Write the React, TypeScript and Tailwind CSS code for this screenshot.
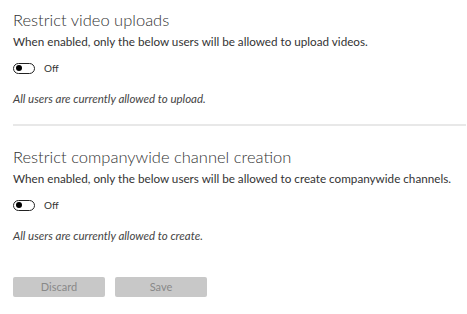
import { useState } from "react";

type SettingProps = {
  title: string;
  description: string;
  status: string;
};

function Toggle({ on, onChange }: { on: boolean; onChange: () => void }) {
  return (
    <button
      type="button"
      onClick={onChange}
      className="flex h-[11px] w-[22px] items-center rounded-full border border-[#222] bg-white px-[2px]"
    >
      <span className={`h-[6px] w-[6px] rounded-full bg-black ${on ? "ml-auto" : ""}`} />
    </button>
  );
}

function Setting({ title, description, status }: SettingProps) {
  const [on, setOn] = useState(false);
  return (
    <section>
      <h2 className="text-[16.5px] font-light leading-[22px] text-[#333]">{title}</h2>
      <p className="mt-[2px] text-[11.7px] leading-[16px] text-[#333]">{description}</p>
      <div className="mt-[12px] flex items-center gap-[9px]">
        <Toggle on={on} onChange={() => setOn(!on)} />
        <span className="text-[10px] leading-[14px] text-[#333]">{on ? "On" : "Off"}</span>
      </div>
      <p className="mt-[16px] text-[11.5px] italic leading-[16px] text-[#444]">{status}</p>
    </section>
  );
}

export default function App() {
  return (
    <div className="min-h-[314px] bg-white pl-[13px] pr-[1px] pt-[9px] font-['Lato',sans-serif]">
      <Setting
        title="Restrict video uploads"
        description="When enabled, only the below users will be allowed to upload videos."
        status="All users are currently allowed to upload."
      />
      <div className="mt-[17px] h-[2px] bg-[#e8e8e8]" />
      <div className="mt-[20px]">
        <Setting
          title="Restrict companywide channel creation"
          description="When enabled, only the below users will be allowed to create companywide channels."
          status="All users are currently allowed to create."
        />
      </div>
      <div className="mt-[33px] flex gap-[10px]">
        <button type="button" className="h-[20px] w-[92px] rounded-[2px] bg-[#c8c8c8] text-[11px] text-[#888]">
          Discard
        </button>
        <button type="button" className="h-[20px] w-[92px] rounded-[2px] bg-[#c8c8c8] text-[11px] text-[#888]">
          Save
        </button>
      </div>
    </div>
  );
}
